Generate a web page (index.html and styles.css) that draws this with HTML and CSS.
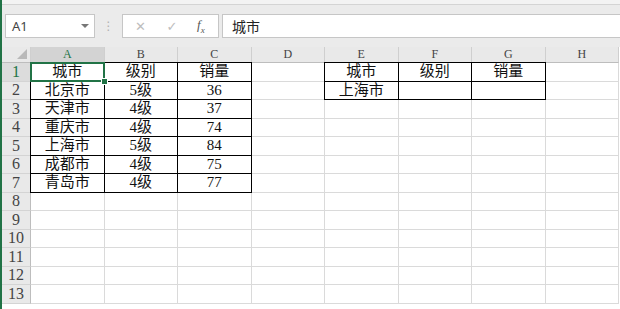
FILE: index.html
```html
<!DOCTYPE html>
<html lang="zh-CN">
<head>
  <meta charset="UTF-8" />
  <meta name="viewport" content="width=device-width, initial-scale=1.0" />
  <title>Sheet1</title>
  <link rel="stylesheet" href="styles.css">
</head>
<body>
  <div class="app">
    <div class="topstrip"></div>

    <!-- formula bar -->
    <div class="fbar">
      <div class="namebox">
        <span>A1</span>
        <span class="drop"></span>
      </div>
      <div class="dots">⋮</div>
      <div class="btns">
        <span class="btn x">✕</span>
        <span class="btn ok">✓</span>
        <span class="btn fx">f<sub>x</sub></span>
      </div>
      <div class="input">城市</div>
    </div>

    <!-- sheet -->
    <div class="sheet">
      <div class="corner"><span class="tri"></span></div>
      <div class="ch cur">A</div>
      <div class="ch">B</div>
      <div class="ch">C</div>
      <div class="ch">D</div>
      <div class="ch">E</div>
      <div class="ch">F</div>
      <div class="ch">G</div>
      <div class="ch">H</div>

      <div class="rh cur">1</div>
      <div class="c b sel">城市<span class="handle"></span></div>
      <div class="c b">级别</div>
      <div class="c b">销量</div>
      <div class="c"></div>
      <div class="c b">城市</div>
      <div class="c b">级别</div>
      <div class="c b">销量</div>
      <div class="c"></div>

      <div class="rh">2</div>
      <div class="c b">北京市</div>
      <div class="c b">5级</div>
      <div class="c b">36</div>
      <div class="c"></div>
      <div class="c b">上海市</div>
      <div class="c b"></div>
      <div class="c b"></div>
      <div class="c"></div>

      <div class="rh">3</div>
      <div class="c b">天津市</div>
      <div class="c b">4级</div>
      <div class="c b">37</div>
      <div class="c"></div><div class="c"></div><div class="c"></div><div class="c"></div><div class="c"></div>

      <div class="rh">4</div>
      <div class="c b">重庆市</div>
      <div class="c b">4级</div>
      <div class="c b">74</div>
      <div class="c"></div><div class="c"></div><div class="c"></div><div class="c"></div><div class="c"></div>

      <div class="rh">5</div>
      <div class="c b">上海市</div>
      <div class="c b">5级</div>
      <div class="c b">84</div>
      <div class="c"></div><div class="c"></div><div class="c"></div><div class="c"></div><div class="c"></div>

      <div class="rh">6</div>
      <div class="c b">成都市</div>
      <div class="c b">4级</div>
      <div class="c b">75</div>
      <div class="c"></div><div class="c"></div><div class="c"></div><div class="c"></div><div class="c"></div>

      <div class="rh">7</div>
      <div class="c b">青岛市</div>
      <div class="c b">4级</div>
      <div class="c b">77</div>
      <div class="c"></div><div class="c"></div><div class="c"></div><div class="c"></div><div class="c"></div>

      <div class="rh">8</div>
      <div class="c"></div><div class="c"></div><div class="c"></div><div class="c"></div><div class="c"></div><div class="c"></div><div class="c"></div><div class="c"></div>
      <div class="rh">9</div>
      <div class="c"></div><div class="c"></div><div class="c"></div><div class="c"></div><div class="c"></div><div class="c"></div><div class="c"></div><div class="c"></div>
      <div class="rh">10</div>
      <div class="c"></div><div class="c"></div><div class="c"></div><div class="c"></div><div class="c"></div><div class="c"></div><div class="c"></div><div class="c"></div>
      <div class="rh">11</div>
      <div class="c"></div><div class="c"></div><div class="c"></div><div class="c"></div><div class="c"></div><div class="c"></div><div class="c"></div><div class="c"></div>
      <div class="rh">12</div>
      <div class="c"></div><div class="c"></div><div class="c"></div><div class="c"></div><div class="c"></div><div class="c"></div><div class="c"></div><div class="c"></div>
      <div class="rh">13</div>
      <div class="c"></div><div class="c"></div><div class="c"></div><div class="c"></div><div class="c"></div><div class="c"></div><div class="c"></div><div class="c"></div>
    </div>
  </div>
</body>
</html>
```

FILE: styles.css
```css
/* Page */
body {
  margin: 0;
  background: #ffffff;
  font-family: "Liberation Serif", "Noto Sans CJK SC", serif;
  overflow: hidden;
}

.app {
  border-left: 2px solid #217346;
  height: 309px;
  background: #ffffff;
}

/* Ribbon remains at the very top */
.topstrip {
  height: 4px;
  background: #f3f3f3;
  border-bottom: 1px solid #d4d4d4;
}

/* Formula bar */
.fbar {
  display: flex;
  align-items: center;
  height: 24px;
  padding: 9px 0 9px 3px;
  background: #ebebeb;
}

.namebox {
  display: flex;
  align-items: center;
  justify-content: space-between;
  box-sizing: border-box;
  width: 90px;
  height: 24px;
  padding: 0 5px 0 6px;
  background: #fff;
  border: 1px solid #c6c6c6;
  font-family: "Noto Sans", "Liberation Sans", sans-serif;
  font-size: 13px;
  color: #444;
}

.drop {
  width: 0;
  height: 0;
  border-left: 4px solid transparent;
  border-right: 4px solid transparent;
  border-top: 4px solid #777;
}

.dots {
  width: 27px;
  text-align: center;
  color: #b0b0b0;
  font-family: "DejaVu Sans", sans-serif;
  font-size: 12px;
}

.btns {
  display: flex;
  align-items: center;
  box-sizing: border-box;
  width: 97px;
  height: 24px;
  padding-left: 11px;
  background: #fff;
  border: 1px solid #c6c6c6;
}

.btn {
  display: inline-block;
  text-align: center;
  color: #bdbdbd;
  font-family: "DejaVu Sans", sans-serif;
  font-size: 13px;
}

.x { width: 13px; margin-right: 18px; }
.ok { width: 14px; margin-right: 18px; }

.fx {
  color: #555;
  font-family: "Liberation Serif", serif;
  font-style: italic;
  font-size: 13px;
}

.fx sub {
  font-size: 9px;
}

.input {
  flex: 1;
  box-sizing: border-box;
  height: 24px;
  margin-left: 3px;
  padding-left: 9px;
  line-height: 22px;
  background: #fff;
  border: 1px solid #c6c6c6;
  border-right: none;
  font-family: "Noto Sans CJK SC", sans-serif;
  font-size: 14px;
  color: #222;
}

/* Sheet grid */
.sheet {
  display: grid;
  grid-template-columns: 29px repeat(8, 73.5px);
  grid-template-rows: 16px repeat(13, 18.5px);
}

.sheet > div {
  position: relative;
  box-sizing: border-box;
  display: flex;
  align-items: center;
  justify-content: center;
  border-right: 1px solid #dadada;
  border-bottom: 1px solid #dadada;
}

.corner {
  background: #e9e9e9;
}

.corner .tri {
  position: absolute;
  right: 3px;
  bottom: 3px;
  width: 0;
  height: 0;
  border-left: 10px solid transparent;
  border-bottom: 10px solid #b9b9b9;
}

.sheet > .corner,
.sheet > .ch {
  border-right: 1px solid #cfcfcf;
  border-bottom: 1px solid #bdbdbd;
}

.ch {
  background: #e9e9e9;
  color: #444;
  font-size: 12px;
}

.rh {
  background: #e9e9e9;
  color: #444;
  font-size: 16px;
}

.sheet > .rh {
  border-right: 1px solid #bdbdbd;
  border-bottom: 1px solid #d4d4d4;
}

.ch.cur {
  background: #d3d3d3;
  color: #217346;
}

.rh.cur {
  background: #dcdcdc;
  color: #217346;
}

.c {
  font-size: 15px;
  color: #111;
  line-height: 1;
}

/* Cells with a thin black border */
.b::after {
  content: "";
  position: absolute;
  top: -1px;
  left: -1px;
  right: -1px;
  bottom: -1px;
  border: 1px solid #000;
  pointer-events: none;
}

/* Active cell */
.sheet > .sel {
  z-index: 3;
}

.sel::before {
  content: "";
  position: absolute;
  top: -1px;
  left: -1px;
  right: -1px;
  bottom: -1px;
  border: 2px solid #217346;
  z-index: 2;
}

.sel::after {
  z-index: 1;
}

.handle {
  position: absolute;
  right: -4px;
  bottom: -4px;
  width: 5px;
  height: 5px;
  background: #217346;
  border: 1px solid #fff;
  z-index: 4;
}
```
